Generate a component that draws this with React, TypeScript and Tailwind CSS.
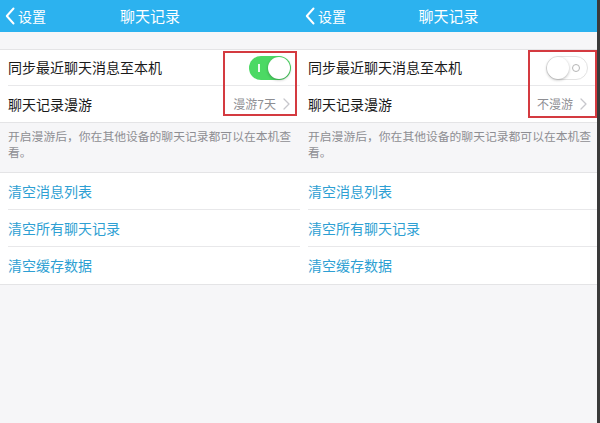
import React from 'react';

const FONT = { fontFamily: '"Noto Sans CJK SC", "Noto Sans", sans-serif' };

function BackChevron() {
  return (
    <svg width="10" height="18" viewBox="0 0 10 18" fill="none">
      <path d="M8.5 1.5 L1.8 9 L8.5 16.5" stroke="white" strokeWidth="2" strokeLinecap="round" strokeLinejoin="round" />
    </svg>
  );
}

function RowChevron() {
  return (
    <svg width="7" height="12" viewBox="0 0 7 12" fill="none">
      <path d="M1 1 L6 6 L1 11" stroke="#c7c7cc" strokeWidth="1.3" strokeLinecap="round" strokeLinejoin="round" />
    </svg>
  );
}

function Toggle({ on }: { on: boolean }) {
  if (on) {
    return (
      <div className="relative w-[42px] h-[24px] rounded-full bg-[#4cd964]">
        <div className="absolute left-[9px] top-[8px] w-[1.5px] h-[8px] bg-white/90" />
        <div className="absolute right-[1px] top-[1px] w-[22px] h-[22px] rounded-full bg-white shadow-[0_1px_3px_rgba(0,0,0,0.3)]" />
      </div>
    );
  }
  return (
    <div className="relative w-[42px] h-[24px] rounded-full bg-white border border-[#e3e3e3]">
      <div className="absolute right-[7px] top-[7px] w-[8px] h-[8px] rounded-full border border-[#b5b5b5]" />
      <div className="absolute left-[0px] top-[0px] w-[22px] h-[22px] rounded-full bg-white shadow-[0_1px_3px_rgba(0,0,0,0.3)]" />
    </div>
  );
}

function Panel({ on, roam, box, edge }: { on: boolean; roam: string; box: string; edge?: boolean }) {
  return (
    <div className={`relative w-[300px] h-[423px] flex flex-col bg-[#f6f6f8] ${edge ? 'border-r-[3px] border-[#3a3a3a]' : ''}`}>
      {/* nav bar */}
      <div className="relative h-[32px] bg-[#2cb2ef] flex items-center">
        <div className="flex items-center pl-[5px] gap-[3px] text-white text-[14px]">
          <BackChevron />
          <span>设置</span>
        </div>
        <div className="absolute inset-0 flex items-center justify-center text-white text-[15px]">聊天记录</div>
      </div>

      <div className="h-[17px]" />

      {/* sync section */}
      <div className="bg-white border-y border-[#e4e4e6]">
        <div className="h-[36px] ml-[8px] pr-[9px] flex items-center justify-between border-b border-[#e8e8ea]">
          <span className="text-[14px] text-[#1a1a1a]">同步最近聊天消息至本机</span>
          <Toggle on={on} />
        </div>
        <div className="h-[36px] ml-[8px] pr-[10px] flex items-center justify-between">
          <span className="text-[14px] text-[#1a1a1a]">聊天记录漫游</span>
          <div className="flex items-center gap-[7px]">
            <span className="text-[12px] text-[#8e8e93]">{roam}</span>
            <RowChevron />
          </div>
        </div>
      </div>

      <div className="pl-[8px] pr-[2px] pt-[5px] pb-[12px] text-[11.8px] leading-[16px] text-[#8e8e93]">
        开启漫游后，你在其他设备的聊天记录都可以在本机查看。
      </div>

      {/* clear section */}
      <div className="bg-white border-y border-[#e4e4e6]">
        {['清空消息列表', '清空所有聊天记录', '清空缓存数据'].map((t, i) => (
          <div
            key={t}
            className={`h-[37px] ml-[8px] flex items-center text-[14px] text-[#2e9fd3] ${i < 2 ? 'border-b border-[#e8e8ea]' : ''}`}
          >
            {t}
          </div>
        ))}
      </div>

      {/* annotation box */}
      <div className={`absolute border-2 border-[#d43a40] ${box}`} />
    </div>
  );
}

export default function App() {
  return (
    <div className="w-[600px] h-[423px] flex overflow-hidden" style={FONT}>
      <Panel on roam="漫游7天" box="left-[223px] top-[51px] w-[74px] h-[65px]" />
      <Panel on={false} roam="不漫游" box="left-[228px] top-[50px] w-[69px] h-[68px]" edge />
    </div>
  );
}
